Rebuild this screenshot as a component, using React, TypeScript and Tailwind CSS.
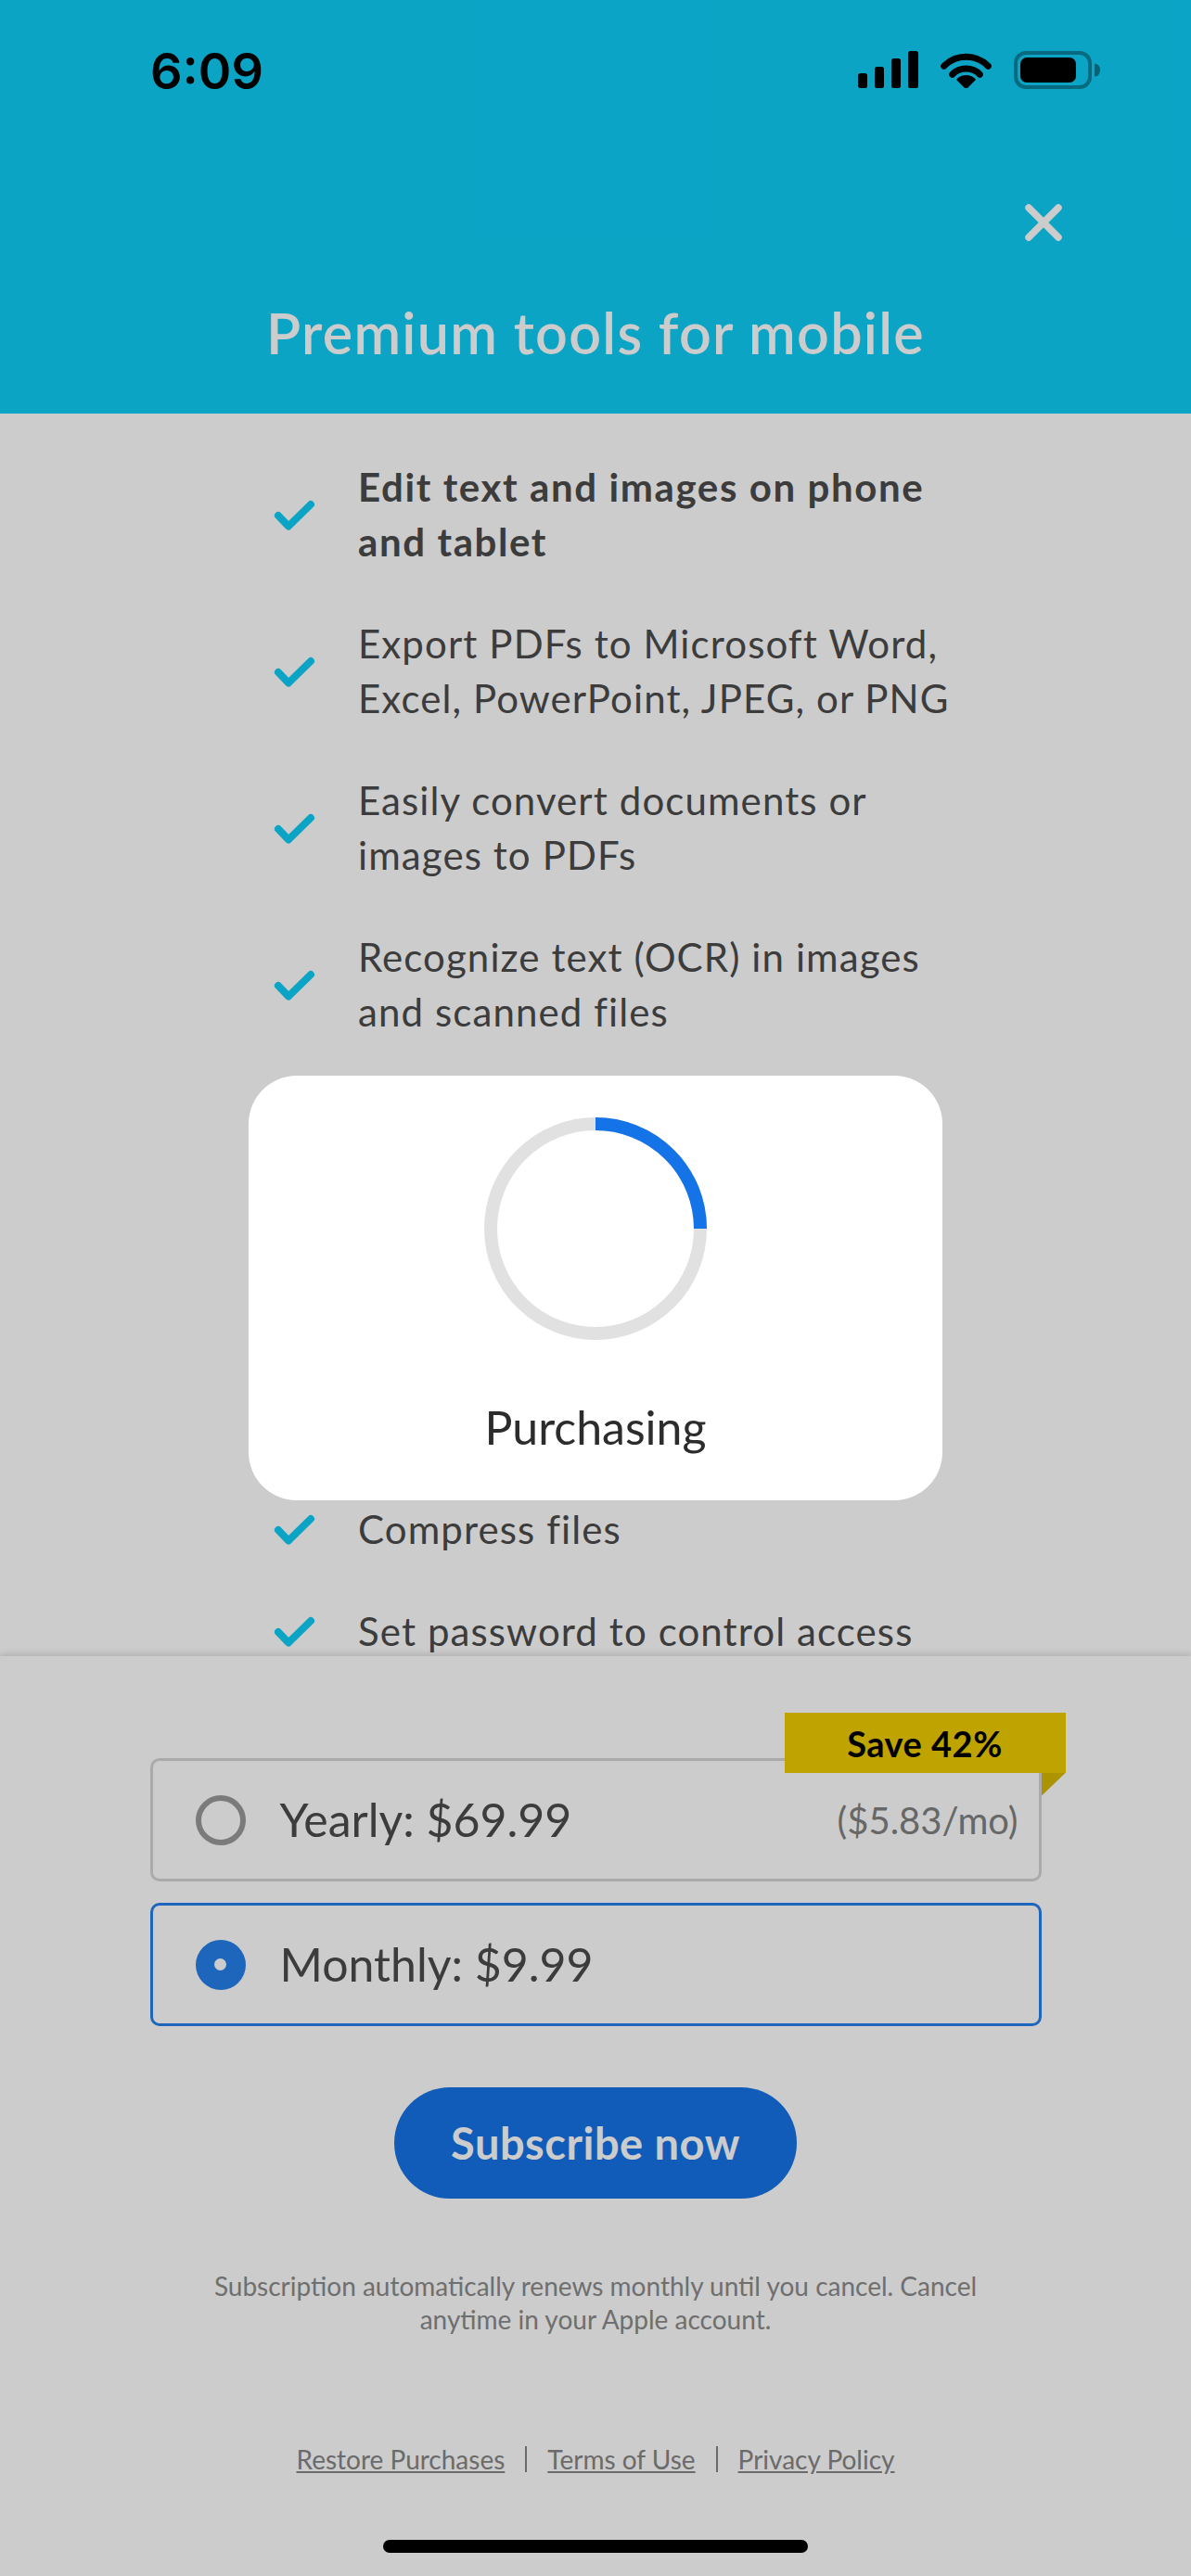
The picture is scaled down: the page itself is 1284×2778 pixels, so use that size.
import React from 'react'

const features = [
  { lines: ['Edit text and images on phone', 'and tablet'], bold: true },
  { lines: ['Export PDFs to Microsoft Word,', 'Excel, PowerPoint, JPEG, or PNG'] },
  { lines: ['Easily convert documents or', 'images to PDFs'] },
  { lines: ['Recognize text (OCR) in images', 'and scanned files'] },
]

const moreFeatures = [{ lines: ['Compress files'] }, { lines: ['Set password to control access'] }]

function Check() {
  return (
    <svg width="45" height="33" viewBox="0 0 45 33" fill="none" className="shrink-0">
      <path d="M5 17 L16 28.5 L40 5" stroke="#0ecdf7" strokeWidth="8" strokeLinecap="round" strokeLinejoin="round" />
    </svg>
  )
}

function Feature({ lines, bold }: { lines: string[]; bold?: boolean }) {
  return (
    <div className="flex items-center gap-[46px] shrink-0">
      <Check />
      <div
        className={`text-[42px] leading-[59px] text-[#4b4b4b] ${
          bold ? 'font-bold tracking-[1.6px]' : 'font-normal tracking-[1.1px]'
        }`}
      >
        {lines.map((l) => (
          <div key={l} className="whitespace-nowrap">
            {l}
          </div>
        ))}
      </div>
    </div>
  )
}

function StatusIcons() {
  return (
    <div className="flex items-center gap-[23px] mb-[4px]">
      {/* signal */}
      <svg width="65" height="40" viewBox="0 0 65 40">
        <rect x="0" y="24" width="10" height="16" rx="2.5" fill="black" />
        <rect x="18" y="17" width="10" height="23" rx="2.5" fill="black" />
        <rect x="36" y="8" width="10" height="32" rx="2.5" fill="black" />
        <rect x="54" y="0" width="11" height="40" rx="2.5" fill="black" />
      </svg>
      {/* wifi */}
      <svg width="57" height="40" viewBox="0 0 57 40" fill="none">
        <path d="M4.7 16.2 A33.5 33.5 0 0 1 52.3 16.2" stroke="black" strokeWidth="7" strokeLinecap="round" />
        <path d="M13.7 25.2 A21 21 0 0 1 43.3 25.2" stroke="black" strokeWidth="7" strokeLinecap="round" />
        <path d="M28.5 40 L19.3 30.8 A13 13 0 0 1 37.7 30.8 Z" fill="black" stroke="black" strokeWidth="2" strokeLinejoin="round" />
      </svg>
      {/* battery */}
      <svg width="94" height="41" viewBox="0 0 94 41" fill="none">
        <rect x="2" y="2" width="80" height="37" rx="11" stroke="black" strokeOpacity="0.35" strokeWidth="4" />
        <rect x="7" y="7" width="60" height="27" rx="7" fill="black" />
        <path d="M87 13.5 Q93 14 93 20.5 Q93 27 87 27.5 Z" fill="black" fillOpacity="0.4" />
      </svg>
    </div>
  )
}

export default function App() {
  return (
    <div className="relative w-[1284px] h-[2778px] overflow-hidden flex flex-col bg-white font-['Lato','Open_Sans',sans-serif]">
      {/* Header */}
      <div className="bg-[#0ecdf7] h-[446px] shrink-0 flex flex-col">
        <div className="mt-[50px] h-[54px] flex items-center justify-between pl-[162px] pr-[97px]">
          <span className="font-['Inter',sans-serif] text-[54px] leading-none font-semibold text-black">6:09</span>
          <StatusIcons />
        </div>
        <div className="mt-[115px] flex justify-end pr-[138px]">
          <svg width="42" height="42" viewBox="0 0 42 42" fill="none">
            <path d="M5 5 L37 37 M37 5 L5 37" stroke="white" strokeWidth="7.5" strokeLinecap="round" />
          </svg>
        </div>
        <h1 className="mt-[67px] text-center text-white text-[61px] leading-[61px] font-semibold tracking-[1.3px]">
          Premium tools for mobile
        </h1>
      </div>

      {/* Feature list */}
      <div className="flex-1 overflow-hidden pl-[295px] pt-[50px] flex flex-col gap-[51px]">
        {features.map((f) => (
          <Feature key={f.lines[0]} lines={f.lines} bold={f.bold} />
        ))}
        <div className="h-[397px] shrink-0" />
        {moreFeatures.map((f) => (
          <Feature key={f.lines[0]} lines={f.lines} />
        ))}
      </div>

      {/* Bottom sheet */}
      <div className="relative z-10 h-[992px] shrink-0 bg-white shadow-[0_-3px_6px_rgba(0,0,0,0.12)] flex flex-col items-center pt-[110px]">
        <div className="w-[961px] flex flex-col gap-[23px]">
          <div className="relative h-[133px] rounded-[10px] border-[3px] border-[#d5d5d5] flex items-center pl-[46px] pr-[22px]">
            <span className="w-[54px] h-[54px] rounded-full border-[6px] border-[#9a9a9a] shrink-0" />
            <span className="ml-[37px] text-[50px] text-[#4b4b4b]">Yearly: $69.99</span>
            <span className="ml-auto text-[40px] text-[#818181]">($5.83/mo)</span>
            <div className="absolute -top-[52px] -right-[29px] w-[303px] h-[65px] bg-[#efcc00] flex items-center justify-center">
              <span className="text-[38px] font-bold text-black leading-none tracking-[0.5px]">Save 42%</span>
              <div className="absolute top-full right-0 w-[26px] h-[25px] bg-[#d8b800] [clip-path:polygon(0_0,100%_0,0_100%)]" />
            </div>
          </div>
          <div className="h-[133px] rounded-[10px] border-[3px] border-[#2680eb] flex items-center pl-[46px] pr-[22px]">
            <span className="w-[54px] h-[54px] rounded-full bg-[#2680eb] flex items-center justify-center shrink-0">
              <span className="w-[13px] h-[13px] rounded-full bg-white" />
            </span>
            <span className="ml-[37px] text-[50px] text-[#4b4b4b]">Monthly: $9.99</span>
          </div>
        </div>

        <button className="mt-[66px] w-[434px] h-[120px] rounded-full bg-[#1473e6] text-white text-[47px] font-bold tracking-[0.5px]">
          Subscribe now
        </button>

        <p className="mt-[76px] text-center text-[28px] leading-[36px] text-[#8b8b8b]">
          Subscription automatically renews monthly until you cancel. Cancel
          <br />
          anytime in your Apple account.
        </p>

        <div className="mt-[115px] h-[36px] flex items-center text-[28px] leading-[36px] text-[#868686]">
          <a className="underline">Restore Purchases</a>
          <span className="mx-[22px] w-[2px] h-[28px] bg-[#868686]" />
          <a className="underline">Terms of Use</a>
          <span className="mx-[22px] w-[2px] h-[28px] bg-[#868686]" />
          <a className="underline">Privacy Policy</a>
        </div>

        <div className="mt-[69px] w-[458px] h-[14px] rounded-full bg-black" />
      </div>

      {/* Dim overlay + purchasing dialog */}
      <div className="absolute inset-0 z-20 bg-[rgba(0,0,0,0.2)] flex items-center justify-center">
        <div className="w-[748px] h-[458px] rounded-[52px] bg-white flex flex-col items-center pt-[45px]">
          <svg width="240" height="240" viewBox="0 0 240 240" fill="none">
            <circle cx="120" cy="120" r="113" stroke="#e1e1e1" strokeWidth="14" />
            <path d="M120 7 A113 113 0 0 1 233 120" stroke="#1473e6" strokeWidth="14" />
          </svg>
          <div className="mt-[65px] text-[50px] leading-[58px] text-[#2c2c2c]">Purchasing</div>
        </div>
      </div>
    </div>
  )
}
